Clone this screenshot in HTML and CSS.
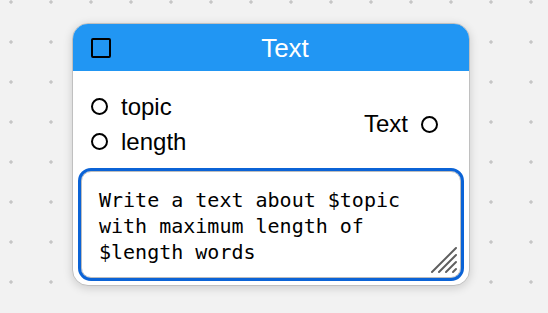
FILE: index.html
```html
<!DOCTYPE html>
<html>
<head>
<meta charset="utf-8">
<link rel="stylesheet" href="styles.css">
</head>
<body>
<div class="canvas">
  <div class="node">
    <div class="node-header">
      <span class="check"></span>
      <span class="title">Text</span>
    </div>
    <div class="ports">
      <div class="inputs">
        <div class="port"><span class="dot"></span><span class="label">topic</span></div>
        <div class="port"><span class="dot"></span><span class="label">length</span></div>
      </div>
      <div class="outputs">
        <div class="port"><span class="label">Text</span><span class="dot"></span></div>
      </div>
    </div>
    <div class="editor">
      <textarea class="prompt" spellcheck="false">Write a text about $topic with maximum length of $length words</textarea>
      <svg class="grip" width="30" height="30" viewBox="0 0 30 30" aria-hidden="true">
        <g stroke="#5f5f5f" stroke-width="2" stroke-linecap="round">
          <line x1="3" y1="27" x2="27" y2="3"/>
          <line x1="10" y1="27" x2="27" y2="10"/>
          <line x1="17" y1="27" x2="27" y2="17"/>
          <line x1="24" y1="27" x2="27" y2="24"/>
        </g>
      </svg>
    </div>
  </div>
</div>
</body>
</html>
```
FILE: styles.css
```css
html, body {
  margin: 0;
  padding: 0;
}
body {
  width: 548px;
  height: 313px;
  overflow: hidden;
  background-color: #f2f2f2;
  background-image: radial-gradient(circle, #c6c6c6 1.4px, transparent 1.9px);
  background-size: 40px 40px;
  background-position: -9px -18px;
  font-family: "Liberation Sans", Arial, sans-serif;
}
.canvas {
  padding: 23px 0 0 72px;
}
.node {
  width: 396px;
  height: 261px;
  border: 1px solid #c0c0c0;
  border-radius: 16px;
  background: #fff;
  box-shadow: 0 2px 10px rgba(0, 0, 0, 0.16);
  overflow: hidden;
  display: flex;
  flex-direction: column;
}
.node-header {
  height: 47px;
  flex: none;
  background: #2196f3;
  display: flex;
  align-items: center;
  padding: 0 10px 0 18px;
}
.check {
  width: 20px;
  height: 20px;
  box-sizing: border-box;
  border: 2px solid #000;
  border-radius: 2px;
  flex: none;
}
.title {
  flex: 1;
  text-align: center;
  color: #fff;
  font-size: 26px;
  line-height: 30px;
}
.ports {
  display: flex;
  justify-content: space-between;
  align-items: center;
  padding: 18px 31px 0 18px;
  height: 70px;
}
.port {
  height: 35px;
  display: flex;
  align-items: center;
  gap: 13px;
  font-size: 24px;
  color: #000;
}
.dot {
  width: 17px;
  height: 17px;
  box-sizing: border-box;
  border: 2px solid #000;
  border-radius: 50%;
  flex: none;
}
.editor {
  position: relative;
  margin: 12px 8px 0 8px;
}
.prompt {
  display: block;
  width: 100%;
  height: 107px;
  box-sizing: border-box;
  margin: 0;
  padding: 15px 16px 9px 17px;
  border: 1px solid #bdbdbd;
  border-radius: 10px;
  outline: 3px solid #0b63d6;
  font-family: "DejaVu Sans Mono", "Liberation Mono", monospace;
  font-size: 20px;
  line-height: 26px;
  color: #000;
  background: #fff;
  resize: none;
  overflow: hidden;
}
.grip {
  position: absolute;
  right: 2px;
  bottom: 3px;
}
```
